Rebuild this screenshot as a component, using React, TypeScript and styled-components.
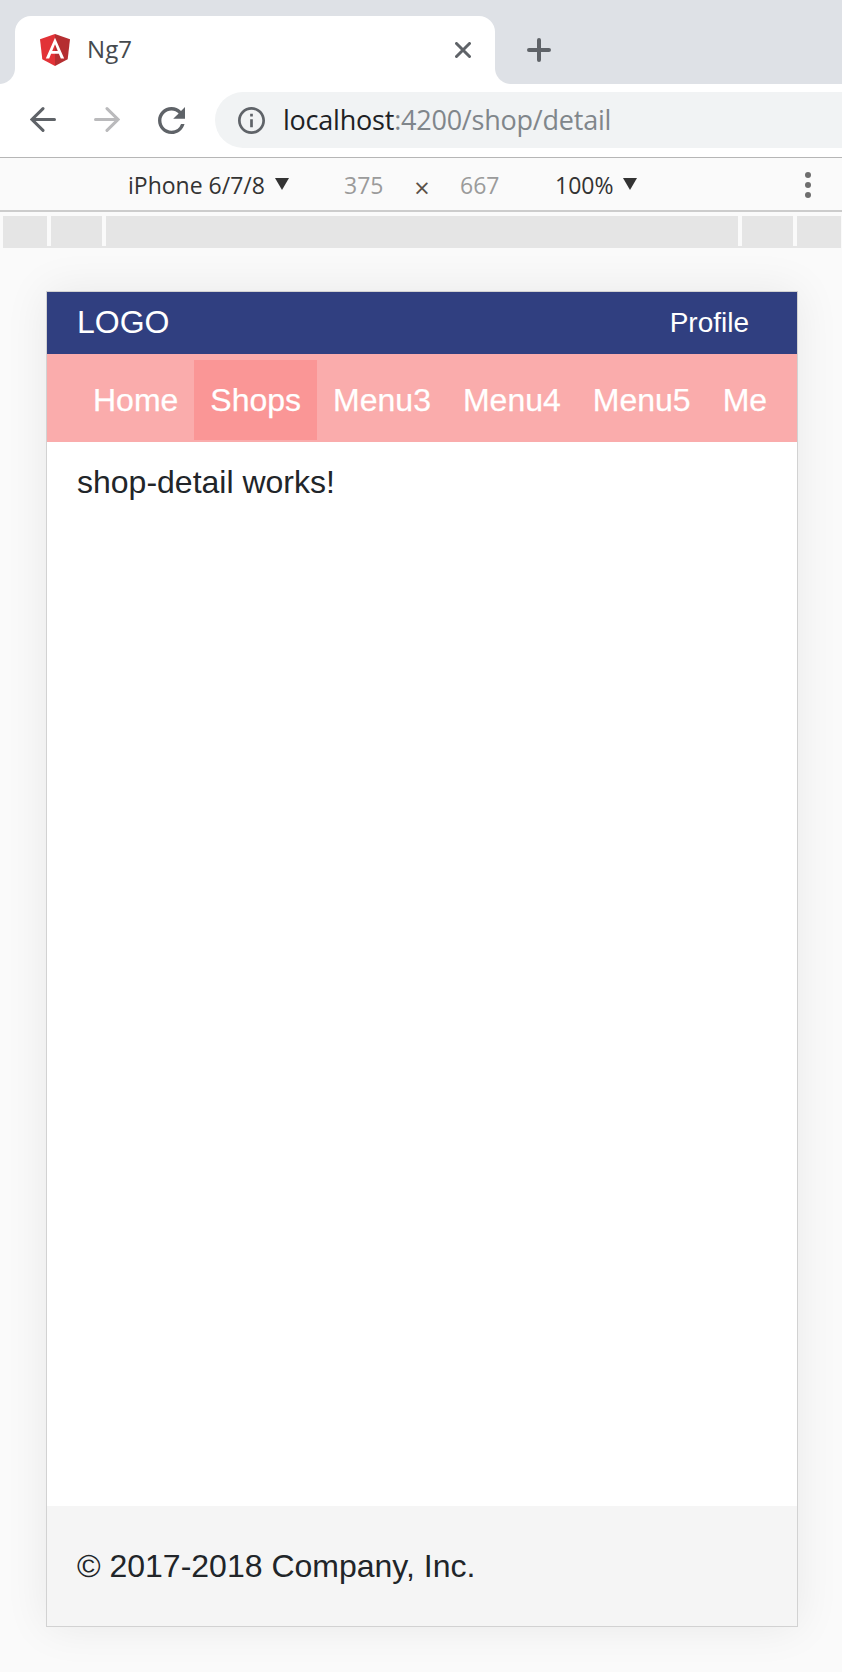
import React from "react";
import styled, { createGlobalStyle } from "styled-components";

const GlobalStyle = createGlobalStyle`
  *, *::before, *::after { box-sizing: border-box; }
  body { margin: 0; background: #fafafa; }
`;

const uiFont = `"Open Sans", "Noto Sans", sans-serif`;
const pageFont = `"Liberation Sans", Arial, sans-serif`;

const Window = styled.div`
  width: 842px;
  height: 1672px;
  overflow: hidden;
  display: flex;
  flex-direction: column;
  background: #fafafa;
  font-family: ${uiFont};
`;

const TabStrip = styled.div`
  height: 84px;
  flex: none;
  padding-top: 16px;
  display: flex;
  background: #dee1e6;
`;

const TabFlare = styled.div<{ $side: "left" | "right" }>`
  width: ${(p) => (p.$side === "left" ? 15 : 16)}px;
  height: 16px;
  align-self: flex-end;
  background: radial-gradient(
    circle at ${(p) => (p.$side === "left" ? "-1px" : "16px")} 0,
    transparent 15.5px,
    #fff 16.5px
  );
`;

const Tab = styled.div`
  width: 480px;
  height: 68px;
  padding: 0 24px 0 25px;
  display: flex;
  align-items: center;
  border-radius: 16px 16px 0 0;
  background: #fff;
`;

const TabTitle = styled.span`
  flex: 1;
  margin: 0 0 2px 17px;
  font-size: 24px;
  line-height: 34px;
  letter-spacing: 0.1px;
  color: #45494d;
`;

const NewTab = styled.div`
  height: 68px;
  margin-left: 16px;
  display: flex;
  align-items: center;
`;

const Toolbar = styled.div`
  height: 74px;
  flex: none;
  padding: 8px 0 9px 30px;
  display: flex;
  align-items: center;
  background: #fff;
  border-bottom: 1px solid #b6b6b6;
`;

const NavButtons = styled.div`
  width: 185px;
  flex: none;
  display: flex;
  align-items: center;
  gap: 38px;
`;

const AddressBar = styled.div`
  flex: 1;
  height: 56px;
  padding-left: 23px;
  display: flex;
  align-items: center;
  border-radius: 28px 0 0 28px;
  background: #f1f3f4;
`;

const Url = styled.span`
  margin-left: 18px;
  font-size: 27px;
  line-height: 40px;
  letter-spacing: -0.22px;
  white-space: nowrap;
  color: #80868b;
`;

const Host = styled.span`
  color: #202124;
`;

const DeviceToolbar = styled.div`
  height: 54px;
  flex: none;
  padding-top: 2px;
  display: flex;
  align-items: center;
  background: #fafafa;
  border-bottom: 2px solid #ccc;
  font-size: 23px;
  line-height: 32px;
`;

const DeviceSelect = styled.div<{ $left: number; $width: number }>`
  margin-left: ${(p) => p.$left}px;
  width: ${(p) => p.$width}px;
  flex: none;
  display: flex;
  align-items: center;
  justify-content: space-between;
  white-space: nowrap;
  color: #333;
`;

const CaretIcon = styled.svg`
  margin-bottom: 2px;
`;

const Dimension = styled.span<{ $left: number }>`
  margin-left: ${(p) => p.$left}px;
  width: 38px;
  flex: none;
  color: #9b9b9b;
`;

const Times = styled.span`
  margin: 6px 0 0 29px;
  width: 22px;
  flex: none;
  font-size: 27px;
  text-align: center;
  color: #5a5147;
`;

const MoreButton = styled.svg`
  margin-left: auto;
  margin-right: 31px;
`;

const Ruler = styled.div`
  height: 32px;
  flex: none;
  margin: 4px 1px 0 3px;
  display: flex;
  gap: 4px;
  border-bottom: 2px solid #e5e5e5;
`;

const RulerSegment = styled.div<{ $width: number }>`
  width: ${(p) => p.$width}px;
  flex: none;
  background: #e5e5e5;
`;

const Device = styled.main`
  width: 752px;
  height: 1336px;
  flex: none;
  margin: 43px 0 0 46px;
  display: flex;
  flex-direction: column;
  border: 1px solid #d2d2d2;
  background: #fff;
  box-shadow: 0 0 42px rgba(0, 0, 0, 0.075);
  font-family: ${pageFont};
  font-size: 32px;
  color: #212529;
`;

const Header = styled.header`
  height: 62px;
  flex: none;
  padding: 0 48px 0 30px;
  display: flex;
  align-items: center;
  justify-content: space-between;
  background: #303f80;
  color: #fff;
`;

const Logo = styled.span`
  margin-bottom: 2px;
  line-height: 48px;
`;

const Profile = styled.a`
  font-size: 28px;
  line-height: 42px;
`;

const Menu = styled.nav`
  height: 88px;
  flex: none;
  padding: 6px 30px 2px;
  background: #faacac;
`;

const MenuScroller = styled.div`
  height: 80px;
  display: flex;
  overflow: hidden;
`;

const MenuItem = styled.a<{ $active?: boolean }>`
  flex: none;
  padding: 0 16px;
  line-height: 80px;
  color: #fff;
  -webkit-text-stroke: 0.25px #fff;
  background: ${(p) => (p.$active ? "#fa9696" : "transparent")};
`;

const Content = styled.section`
  flex: 1;
  padding: 16px 30px;
  line-height: 48px;
`;

const Footer = styled.footer`
  height: 120px;
  flex: none;
  padding: 36px 30px;
  line-height: 48px;
  background: #f5f5f5;
`;

const Caret = () => (
  <CaretIcon width="14" height="12" viewBox="0 0 14 12">
    <path d="M0 0h14L7 12z" fill="#333" />
  </CaretIcon>
);

const AngularLogo = () => (
  <svg width="30" height="32" viewBox="0 0 30 32">
    <path d="M15 0 0 5.3l2.3 20L15 32z" fill="#e23237" />
    <path d="M15 0l15 5.3-2.3 20L15 32z" fill="#b52e31" />
    <path
      fill="#fff"
      fillRule="evenodd"
      d="M15 3.8 5.8 24.4h3.4l1.9-4.6h7.8l1.9 4.6h3.4zM15 10.3l2.8 6.7h-5.6z"
    />
  </svg>
);

const segments = [44, 51, 632, 51, 44];
const menu = ["Home", "Shops", "Menu3", "Menu4", "Menu5", "Me"];

export default function App() {
  return (
    <Window>
      <GlobalStyle />
      <TabStrip>
        <TabFlare $side="left" />
        <Tab>
          <AngularLogo />
          <TabTitle>Ng7</TabTitle>
          <svg width="16" height="16" viewBox="0 0 16 16">
            <path d="M1.5 1.5l13 13M14.5 1.5l-13 13" stroke="#5f6368" strokeWidth="3" strokeLinecap="round" />
          </svg>
        </Tab>
        <TabFlare $side="right" />
        <NewTab>
          <svg width="24" height="24" viewBox="0 0 24 24">
            <path d="M12 2v20M2 12h20" stroke="#5f6368" strokeWidth="4" strokeLinecap="round" />
          </svg>
        </NewTab>
      </TabStrip>
      <Toolbar>
        <NavButtons>
          <svg width="26" height="26" viewBox="0 0 26 26">
            <path d="M24.5 12.5H2M13 1.6L2 12.5l11 10.9" fill="none" stroke="#5f6368" strokeWidth="3" strokeLinecap="round" />
          </svg>
          <svg width="26" height="26" viewBox="0 0 26 26">
            <path d="M1.5 12.5H24M13 1.6l11 10.9-11 10.9" fill="none" stroke="#bababc" strokeWidth="3" strokeLinecap="round" />
          </svg>
          <svg width="27" height="27" viewBox="4 4 16 16">
            <path
              fill="#5f6368"
              d="M17.65 6.35A7.958 7.958 0 0 0 12 4c-4.42 0-7.99 3.58-7.99 8s3.57 8 7.99 8c3.73 0 6.84-2.55 7.73-6h-2.08A5.99 5.99 0 0 1 12 18c-3.31 0-6-2.69-6-6s2.69-6 6-6c1.66 0 3.14.69 4.22 1.78L13 11h7V4l-2.35 2.35z"
            />
          </svg>
        </NavButtons>
        <AddressBar>
          <svg width="27" height="27" viewBox="2 2 20 20">
            <path
              fill="#5f6368"
              d="M11 7h2v2h-2zm0 4h2v6h-2zm1-9C6.48 2 2 6.48 2 12s4.48 10 10 10 10-4.48 10-10S17.52 2 12 2zm0 18c-4.41 0-8-3.59-8-8s3.59-8 8-8 8 3.59 8 8-3.59 8-8 8z"
            />
          </svg>
          <Url>
            <Host>localhost</Host>:4200/shop/detail
          </Url>
        </AddressBar>
      </Toolbar>
      <DeviceToolbar>
        <DeviceSelect $left={128} $width={161}>
          iPhone 6/7/8 <Caret />
        </DeviceSelect>
        <Dimension $left={55}>375</Dimension>
        <Times>×</Times>
        <Dimension $left={27}>667</Dimension>
        <DeviceSelect $left={57} $width={82}>
          100% <Caret />
        </DeviceSelect>
        <MoreButton width="6" height="26" viewBox="0 0 6 26" fill="#6e6e6e">
          <circle cx="3" cy="3" r="3" />
          <circle cx="3" cy="13" r="3" />
          <circle cx="3" cy="23" r="3" />
        </MoreButton>
      </DeviceToolbar>
      <Ruler>
        {segments.map((width, i) => (
          <RulerSegment key={i} $width={width} />
        ))}
      </Ruler>
      <Device>
        <Header>
          <Logo>LOGO</Logo>
          <Profile>Profile</Profile>
        </Header>
        <Menu>
          <MenuScroller>
            {menu.map((label) => (
              <MenuItem key={label} $active={label === "Shops"}>
                {label}
              </MenuItem>
            ))}
          </MenuScroller>
        </Menu>
        <Content>shop-detail works!</Content>
        <Footer>© 2017-2018 Company, Inc.</Footer>
      </Device>
    </Window>
  );
}
